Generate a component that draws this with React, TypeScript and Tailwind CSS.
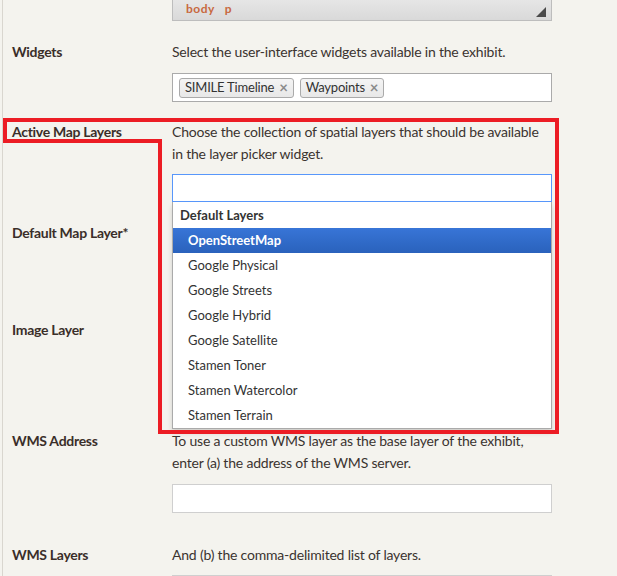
import React from "react";

const font = { fontFamily: "Lato, 'Open Sans', sans-serif" };

function Label({ children }: { children: React.ReactNode }) {
  return (
    <div className="w-[172px] shrink-0 pl-[12px] text-[14px] leading-[22px] font-bold tracking-[-0.3px] text-[#3a2e29]">
      {children}
    </div>
  );
}

function Tag({ text }: { text: string }) {
  return (
    <div className="flex h-[20px] items-center gap-[5px] rounded-[3px] border border-[#aaaaaa] bg-gradient-to-b from-[#f4f4f4] to-[#e8e8e8] pl-[5px] pr-[5px] text-[13px] tracking-[-0.2px] text-[#333]">
      <span>{text}</span>
      <span className="text-[15px] font-bold leading-none text-[#8a8a8a]">×</span>
    </div>
  );
}

const layers = [
  "Google Physical",
  "Google Streets",
  "Google Hybrid",
  "Google Satellite",
  "Stamen Toner",
  "Stamen Watercolor",
  "Stamen Terrain",
];

export default function App() {
  return (
    <div
      className="relative h-[576px] w-[617px] overflow-hidden bg-[#f4f3ee] text-[#3b3430]"
      style={font}
    >
      <div className="absolute left-[2px] top-0 h-full w-[1px] bg-[#d9d6cf]" />

      {/* editor footer */}
      <div className="flex">
        <div className="w-[172px] shrink-0" />
        <div className="relative flex h-[21px] w-[380px] items-start border-x border-b border-[#bdbdbd] bg-gradient-to-b from-[#e6e6e6] to-[#d9d9d9] pl-[13px]">
          <span className="text-[12px] font-bold leading-[17px] tracking-[0.5px] text-[#c8693f]">
            body&nbsp;&nbsp;&nbsp;p
          </span>
          <svg className="absolute right-[5px] top-[7px]" width="10" height="10" viewBox="0 0 10 10">
            <polygon points="10,0 10,10 0,10" fill="#4a4a4a" />
          </svg>
        </div>
      </div>

      {/* Widgets */}
      <div className="mt-[20px] flex">
        <Label>Widgets</Label>
        <div className="w-[380px]">
          <div className="text-[14px] leading-[22px] tracking-[-0.2px]">
            Select the user-interface widgets available in the exhibit.
          </div>
          <div className="mt-[10px] flex h-[29px] items-center gap-[6px] border border-[#aaaaaa] bg-white pl-[6px]">
            <Tag text="SIMILE Timeline" />
            <Tag text="Waypoints" />
          </div>
        </div>
      </div>

      {/* Active Map Layers */}
      <div className="mt-[19px] flex">
        <Label>Active Map Layers</Label>
        <div className="relative w-[380px]">
          <div className="text-[14px] leading-[22px] tracking-[-0.2px]">
            Choose the collection of spatial layers that should be available
            <br />
            in the layer picker widget.
          </div>
          <div className="mt-[9px] h-[28px] border border-[#5897fb] bg-white" />
          <div className="absolute left-0 top-[81px] z-10 w-[380px] border border-t-0 border-[#aaaaaa] bg-white shadow-[0_4px_5px_rgba(0,0,0,0.15)]">
            <div className="flex h-[26px] items-center pl-[7px] pt-[2px] text-[13px] font-bold text-[#333]">
              Default Layers
            </div>
            <div className="flex h-[25px] items-center bg-gradient-to-b from-[#3875d7] to-[#2a62bc] pl-[15px] text-[13px] font-bold text-white">
              OpenStreetMap
            </div>
            {layers.map((l) => (
              <div key={l} className="flex h-[25px] items-center pl-[15px] text-[13px] text-[#333]">
                {l}
              </div>
            ))}
          </div>
        </div>
      </div>

      {/* Default Map Layer */}
      <div className="mt-[20px] flex">
        <Label>Default Map Layer*</Label>
        <div className="h-[97px] w-[380px]" />
      </div>

      {/* Image Layer */}
      <div className="flex">
        <Label>Image Layer</Label>
        <div className="h-[111px] w-[380px]" />
      </div>

      {/* WMS Address */}
      <div className="flex">
        <Label>WMS Address</Label>
        <div className="w-[380px]">
          <div className="text-[14px] leading-[22px] tracking-[-0.2px]">
            To use a custom WMS layer as the base layer of the exhibit,
            <br />
            enter (a) the address of the WMS server.
          </div>
          <div className="mt-[10px] h-[29px] border border-[#cfcfcf] bg-white" />
        </div>
      </div>

      {/* WMS Layers */}
      <div className="mt-[31px] flex">
        <Label>WMS Layers</Label>
        <div className="w-[380px]">
          <div className="text-[14px] leading-[22px] tracking-[-0.2px]">
            And (b) the comma-delimited list of layers.
          </div>
          <div className="mt-[9px] h-[29px] border border-[#cfcfcf] bg-white" />
        </div>
      </div>

      {/* annotation */}
      <svg className="pointer-events-none absolute left-0 top-0 z-20" width="617" height="576">
        <polygon
          points="5,120 557,120 557,432 160,432 160,141 5,141"
          fill="none"
          stroke="#ec1c24"
          strokeWidth="4"
        />
      </svg>
    </div>
  );
}
